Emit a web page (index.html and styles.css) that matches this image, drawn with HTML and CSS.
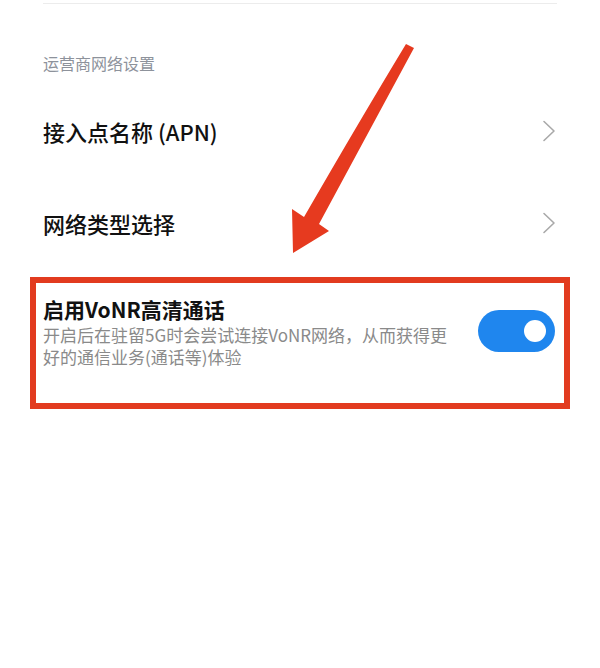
FILE: index.html
```html
<!DOCTYPE html>
<html lang="zh-CN">
<head>
<meta charset="utf-8">
<link rel="stylesheet" href="styles.css">
</head>
<body>
<div class="page">
  <div class="divider"></div>
  <div class="section-title">运营商网络设置</div>
  <div class="row">
    <span class="row-label">接入点名称 (APN)</span>
    <svg class="chev" width="14" height="22" viewBox="0 0 14 22"><path d="M2 1.5 L12 11 L2 20.5" fill="none" stroke="#a9a9a9" stroke-width="1.6" stroke-linecap="round" stroke-linejoin="round"/></svg>
  </div>
  <div class="row">
    <span class="row-label">网络类型选择</span>
    <svg class="chev" width="14" height="22" viewBox="0 0 14 22"><path d="M2 1.5 L12 11 L2 20.5" fill="none" stroke="#a9a9a9" stroke-width="1.6" stroke-linecap="round" stroke-linejoin="round"/></svg>
  </div>
  <div class="vonr">
    <div class="vonr-text">
      <div class="vonr-title">启用VoNR高清通话</div>
      <div class="vonr-desc">开启后在驻留5G时会尝试连接VoNR网络，从而获得更好的通信业务(通话等)体验</div>
    </div>
    <div class="toggle"><div class="knob"></div></div>
  </div>
  <svg class="arrow" width="600" height="668" viewBox="0 0 600 668">
    <path d="M406 44 L414 48 L319 224 L329 231 L293 253 L292 209 L304 217 Q360 120 406 44 Z" fill="#e63a1f"/>
  </svg>
</div>
</body>
</html>
```

FILE: styles.css
```css
html, body {
  margin: 0;
  padding: 0;
  background: #ffffff;
}
.page {
  position: relative;
  width: 600px;
  height: 668px;
  overflow: hidden;
  font-family: "Noto Sans CJK SC", "Noto Sans", sans-serif;
}
.divider {
  margin: 3px 43px 0 43px;
  height: 1px;
  background: #ececec;
}
.section-title {
  margin: 48px 0 0 43px;
  font-size: 16px;
  line-height: 22px;
  color: #8d929b;
}
.row {
  margin-top: 11px;
  height: 92px;
  padding: 0 43px;
  display: flex;
  align-items: center;
  justify-content: space-between;
}
.row + .row {
  margin-top: 0;
}
.row-label {
  font-size: 22px;
  line-height: 30px;
  font-weight: 500;
  color: #111111;
}
.chev {
  display: block;
  margin-right: 1px;
}
.vonr {
  margin: 8px 30px 0 30px;
  border: 6px solid #e23b1f;
  padding: 11px 9px 35px 7px;
  display: flex;
  align-items: center;
  justify-content: space-between;
}
.vonr-text {
  width: 418px;
}
.vonr-title {
  font-size: 21px;
  line-height: 30px;
  font-weight: 600;
  color: #111111;
}
.vonr-desc {
  font-size: 17px;
  line-height: 22px;
  color: #8a8a8a;
}
.toggle {
  width: 77px;
  height: 42px;
  border-radius: 21px;
  background: #1f86ee;
  display: flex;
  align-items: center;
  justify-content: flex-end;
  padding-right: 9px;
  box-sizing: border-box;
}
.knob {
  width: 22px;
  height: 22px;
  border-radius: 50%;
  background: #ffffff;
}
.arrow {
  position: absolute;
  left: 0;
  top: 0;
  pointer-events: none;
}
```
